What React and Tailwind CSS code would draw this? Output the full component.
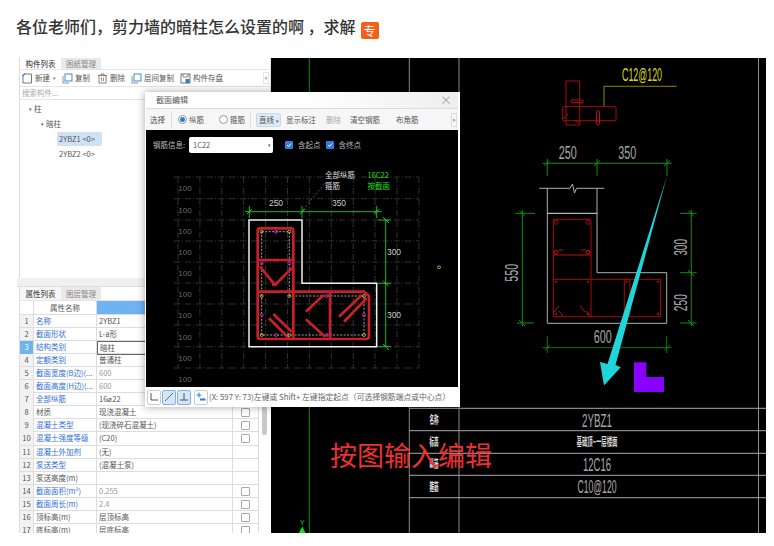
import React from 'react';

const cjk = { fontFamily: '"Noto Sans CJK SC", "Liberation Sans", sans-serif' };
const cad = '"Liberation Sans", "Noto Sans CJK SC", sans-serif';

const rows = [
    ['名称', '2YBZ1', 'blue', ''],
    ['截面形状', 'L-a形', 'blue', ''],
    ['结构类别', '暗柱', 'blue', ''],
    ['定额类别', '普通柱', 'blue', ''],
    ['截面宽度(B边)(...', '600', 'blue', 'gray'],
    ['截面高度(H边)(...', '600', 'blue', 'gray'],
    ['全部纵筋', '16⌀22', 'blue', ''],
    ['材质', '现浇混凝土', 'dark', '', true],
    ['混凝土类型', '(现浇碎石混凝土)', 'blue', '', true],
    ['混凝土强度等级', '(C20)', 'blue', '', true],
    ['混凝土外加剂', '(无)', 'blue', ''],
    ['泵送类型', '(混凝土泵)', 'blue', ''],
    ['泵送高度(m)', '', 'dark', ''],
    ['截面面积(m²)', '0.255', 'blue', 'gray', true],
    ['截面周长(m)', '2.4', 'blue', 'gray', true],
    ['顶标高(m)', '层顶标高', 'dark', '', true],
    ['底标高(m)', '层底标高', 'dark', '', true],
];

const SmallIcon = ({ type }) => (
    <svg width="11" height="11" viewBox="0 0 11 11" fill="none" className="shrink-0">
        {type === 'new' && <>
            <path d="M1 2.5V10H9.5V1H3" stroke="#555" strokeWidth="0.8" />
            <path d="M0.5 3L3 0.5" stroke="#2b7cd3" strokeWidth="1.2" />
        </>}
        {type === 'copy' && <>
            <path d="M1 3V10H7" stroke="#777" strokeWidth="0.8" />
            <rect x="3" y="1" width="7" height="7" stroke="#2b7cd3" strokeWidth="0.9" />
        </>}
        {type === 'del' && <>
            <path d="M1 2.5H10M4 2.5V1H7V2.5M2 2.5V10H9V2.5" stroke="#666" strokeWidth="0.8" />
            <path d="M4.5 4.5V8M6.5 4.5V8" stroke="#d0503c" strokeWidth="0.8" />
        </>}
        {type === 'save' && <>
            <rect x="1" y="1" width="9" height="9" stroke="#555" strokeWidth="0.8" />
            <path d="M3 1V4H8V1" stroke="#555" strokeWidth="0.7" />
            <rect x="5.5" y="6" width="4" height="4" fill="#2b7cd3" />
        </>}
    </svg>
);

const ToolItem = ({ type, label, className }) => (
    <div className={`flex items-center gap-[2px] ${className}`}>
        <SmallIcon type={type} />
        <span>{label}</span>
    </div>
);

const TopPanel = () => (
    <div className="h-[220px] border-l border-[#ddd] ml-[2px] border-r flex flex-col text-[7.5px] text-[#555]">
        <div className="flex h-[12px] border-b border-[#e5e5e5] shrink-0">
            <div className="w-[41px] text-center leading-[12px] font-medium">构件列表</div>
            <div className="w-[40px] text-center leading-[12px] bg-[#e9e9e9] text-[#888]">图纸管理</div>
        </div>
        <div className="flex items-center h-[17px] pl-[2px] border-b border-[#e5e5e5] shrink-0">
            <ToolItem type="new" label="新建" />
            <span className="ml-[3px] text-[5px] text-[#777]">▾</span>
            <ToolItem type="copy" label="复制" className="ml-[6px]" />
            <ToolItem type="del" label="删除" className="ml-[7px]" />
            <ToolItem type="copy" label="层间复制" className="ml-[6px]" />
            <ToolItem type="save" label="构件存盘" className="ml-[6px]" />
            <span className="ml-auto mr-[1px] w-[6px] h-[12px] border border-[#e5e5e5] text-[6px] leading-[10px] text-center">»</span>
        </div>
        <div className="h-[13px] pl-[2px] leading-[12px] text-[#aaa] border-b border-[#e5e5e5] shrink-0">搜索构件...</div>
        <div className="relative flex-1">
            <div className="flex items-center mt-[3px] ml-[9px] h-[12px]"><span className="text-[5px] mr-[2px]">▾</span>柱</div>
            <div className="flex items-center mt-[3px] ml-[21px] h-[12px]"><span className="text-[5px] mr-[2px]">▾</span>暗柱</div>
            <div className="ml-[37px] mt-[2px] w-[45px] h-[14px] leading-[14px] pl-[2px] bg-[#cfe2f5] rounded-[2px]">2YBZ1 &lt;0&gt;</div>
            <div className="ml-[37px] mt-[1px] h-[14px] leading-[14px] pl-[2px]">2YBZ2 &lt;0&gt;</div>
        </div>
    </div>
);

const PropRow = ({ n, row }) => {
    const [name, value, nameColor, valueColor, check] = row;
    const selected = n === 3;
    return (
        <div className="grid grid-cols-[14px_63px_136px_26px] h-[13.1px] leading-[12.5px] border-b border-[#ddd]">
            <div className={`text-center border-r border-[#ddd] ${selected ? 'bg-[#6fb3f2] text-white' : 'bg-[#f2f2f2] text-[#555]'}`}>{n}</div>
            <div className={`pl-[2px] border-r border-[#ddd] whitespace-nowrap overflow-hidden ${nameColor === 'blue' ? 'text-[#2f6fd8]' : 'text-[#555]'}`}>{name}</div>
            <div className={`pl-[2px] border-r whitespace-nowrap ${selected ? 'border border-[#666]' : 'border-[#ddd]'} ${valueColor === 'gray' ? 'text-[#999]' : 'text-[#555]'}`}>{value}</div>
            <div className="flex items-center justify-center border-r border-[#ddd]">
                {check && <span className="block w-[9px] h-[9px] border border-[#aaa] rounded-[1px]"></span>}
            </div>
        </div>
    );
};

const BottomPanel = () => (
    <div className="flex-1 min-h-0 ml-[2px] border-l border-[#ddd] text-[7.5px] text-[#555] overflow-hidden">
        <div className="flex h-[14px] border-b border-[#e5e5e5]">
            <div className="w-[41px] text-center leading-[14px] bg-[#f6f6f6] font-medium">属性列表</div>
            <div className="w-[40px] text-center leading-[14px] bg-[#e9e9e9] text-[#888]">图层管理</div>
        </div>
        <div className="flex">
            <div className="w-[239px] shrink-0">
                <div className="grid grid-cols-[14px_63px_136px_26px] h-[13.6px] leading-[13px] border-b border-[#ddd]">
                    <div className="border-r border-[#ddd]"></div>
                    <div className="text-center border-r border-[#ddd]">属性名称</div>
                    <div className="col-span-2 bg-[#6fb3f2]"></div>
                </div>
                {rows.map((row, i) => <PropRow key={i} n={i + 1} row={row} />)}
            </div>
            <div className="ml-[3px] mt-[99px] w-[5px] h-[35px] bg-[#c9c9c9] rounded-[2px]"></div>
        </div>
    </div>
);

const dot = (x, y, color, key) => <circle key={key} cx={x} cy={y} r="1.5" fill="none" stroke={color} strokeWidth="0.8" />;

const yellowDots = [[261.7, 231.7], [289.3, 231.7], [261.7, 296], [289.3, 296], [364, 296], [261.7, 335], [289.3, 335], [364, 335], [439, 267.3]];
const pinkDots = [[276, 231.7], [261.7, 263.3], [289.3, 263.3], [326.7, 296], [261.7, 315], [364, 315], [276, 335], [326.7, 335]];

const SectionDrawing = () => (
    <svg width="312" height="229" viewBox="146 158 312 229" className="block">
        <g stroke="#303030" strokeWidth="1" strokeDasharray="6 2 1 2" fill="none">
            {[0, 1, 2, 3, 4, 5, 6, 7, 8, 9, 10, 11].map(i => <line key={i} x1={178 + 21.9 * i} y1="177" x2={178 + 21.9 * i} y2="368" />)}
            {[177, 198.7, 220, 241, 262, 283, 304, 325, 346.7, 368].map(y => <line key={y} x1="174" y1={y} x2="419" y2={y} />)}
        </g>
        {[188, 210, 231, 252, 272.7, 294, 315.3, 336.7, 358, 379].map(y => (
            <text key={y} x="185" y={y + 3} textAnchor="middle" fontSize="8" fill="#6a6a6a" fontFamily={cad}>100</text>
        ))}
        <path d="M303 210L325 183" stroke="#666" strokeWidth="0.8" strokeDasharray="2 2" />
        <g fontSize="7.5" fontFamily='"Noto Sans CJK SC", sans-serif'>
            <text x="325" y="178" fill="#ddd">全部纵筋</text>
            <text x="325" y="189" fill="#ddd">箍筋</text>
            <text x="367.5" y="178" fill="#19e019">16C22</text>
            <text x="367.5" y="189" fill="#19e019">按截面</text>
        </g>
        <path d="M249 220H302V283.3H376.7V346.7H249Z" fill="none" stroke="#eee" strokeWidth="1.5" />
        <g stroke="#1fd11f" strokeWidth="0.9" fill="none">
            <path d="M245 211.7H381.7M249.3 206V218M302 206V218M376.7 206V218M247 214L252 209M300 214L305 209M374 214L379 209" />
            <path d="M385.7 220V347M378 220H391M378 283.3H391M378 346.7H391M383 217L389 223M383 280.5L389 286.5M383 344L389 350" />
        </g>
        <g fontSize="8.5" fill="#ccc" fontFamily={cad} textAnchor="middle">
            <text x="276" y="206">250</text>
            <text x="339" y="206">350</text>
            <text x="394" y="255">300</text>
            <text x="394" y="318">300</text>
        </g>
        <path d="M261.7 231.7H289.3V296H364V335H261.7Z" fill="none" stroke="#ccc" strokeWidth="0.8" strokeDasharray="2 1.5" />
        <g stroke="#c8202a" strokeWidth="2.7" fill="none" strokeLinejoin="round">
            <path d="M260 228.3H291Q293.3 228.3 293.3 231V291.7H364L369 296V336Q369 339 366 339H260.5Q257.7 339 257.7 336V231Q257.7 228.3 260 228.3Z" />
            <path d="M258 260H292M260 266.7L275 285L291.7 268.3M272 285L278 283M258 291.7H293.3M293.3 291.7V339M330 293V338" />
            <path d="M269 318.3L289 338.3M273.3 314L291.7 331.7M306 311.7L323.3 295M306 319.3L325 336.7M339 316.7L361.7 295M344 321.7L366.7 298.3" />
        </g>
        {yellowDots.map((p, i) => dot(p[0], p[1], '#d8c53a', `y${i}`))}
        {pinkDots.map((p, i) => dot(p[0], p[1], '#e020e0', `p${i}`))}
    </svg>
);

const Radio = ({ on }) => (
    <span className="flex items-center justify-center w-[9px] h-[9px] rounded-full border border-[#999] bg-white">
        {on && <span className="block w-[5px] h-[5px] rounded-full bg-[#2b7cd3]"></span>}
    </span>
);

const Check = () => (
    <span className="flex items-center justify-center w-[8px] h-[8px] bg-[#2f7fe0] rounded-[1px]">
        <svg width="6" height="6" viewBox="0 0 6 6"><path d="M1 3L2.5 4.5L5 1.5" fill="none" stroke="white" strokeWidth="1" /></svg>
    </span>
);

const StatusButton = ({ active, children, className }) => (
    <div className={`w-[14px] h-[15px] rounded-[2px] border flex items-center justify-center shrink-0 ${active ? 'bg-[#d5e6f8] border-[#7fb2e8]' : 'bg-white border-[#ccc]'} ${className}`}>
        <svg width="10" height="10" viewBox="0 0 10 10" fill="none">{children}</svg>
    </div>
);

const SectionDialog = () => (
    <div className="absolute left-[128px] top-[34px] w-[315px] h-[315px] bg-white pl-px pr-[2px] flex flex-col text-[7.5px] text-[#555] shadow-[0_0_8px_rgba(0,0,0,0.35)]">
        <div className="flex items-center justify-between h-[16px] pl-[10px] pr-[6px] shrink-0 bg-gradient-to-r from-white via-white to-[#eeeeee]">
            <span className="text-[8px]">截面编辑</span>
            <span className="text-[12px] leading-none text-[#888] font-light">×</span>
        </div>
        <div className="flex items-center h-[22px] bg-[#f6f6f6] border-t border-[#ddd] shrink-0">
            <span className="ml-[4px] w-[16px]">选择</span>
            <span className="ml-[5px] w-px h-[14px] bg-[#ddd]"></span>
            <div className="ml-[6px] flex items-center gap-[2px]"><Radio on /><span>纵筋</span></div>
            <div className="ml-[15px] flex items-center gap-[2px]"><Radio /><span>箍筋</span></div>
            <span className="ml-[5px] w-px h-[14px] bg-[#ddd]"></span>
            <span className="ml-[5px] w-[25px] h-[14px] leading-[12px] pl-[2px] bg-[#dfeaf7] border border-[#c5d9ef] rounded-[2px] whitespace-nowrap">直线 <span className="text-[5px]">▾</span></span>
            <span className="ml-[5px]">显示标注</span>
            <span className="ml-[10px] text-[#aaa]">删除</span>
            <span className="ml-[9px]">清空钢筋</span>
            <span className="ml-[16px]">布角筋</span>
            <span className="ml-auto mr-[1px] w-[6px] h-[14px] border border-[#ddd] text-[6px] leading-[12px] text-center">»</span>
        </div>
        <div className="flex-1 min-h-0 bg-black flex flex-col">
            <div className="flex items-center h-[28px] pt-[1px] pl-[7px] text-[#bbb] shrink-0">
                <span className="w-[36px] whitespace-nowrap">钢筋信息:</span>
                <div className="flex items-center justify-between w-[84px] h-[16px] pl-[4px] pr-[2px] bg-white text-[#555] rounded-[2px]">
                    <span>1C22</span>
                    <span className="text-[5px]">▾</span>
                </div>
                <span className="ml-[12px]"><Check /></span>
                <span className="ml-[5px]">含起点</span>
                <span className="ml-[5px]"><Check /></span>
                <span className="ml-[5px]">含终点</span>
            </div>
            <SectionDrawing />
        </div>
        <div className="flex items-center h-[20px] shrink-0 pl-[1px] bg-white">
            <StatusButton><path d="M2 1V8H9" stroke="#555" /></StatusButton>
            <StatusButton active className="ml-px"><path d="M1 9L9 1" stroke="#666" /></StatusButton>
            <StatusButton active className="ml-px"><path d="M5 1V8M1 8H9" stroke="#555" /></StatusButton>
            <StatusButton className="ml-[3px]"><path d="M3 0.5V5.5M0.5 3H5.5" stroke="#2b7cd3" /><path d="M4 7.5H9.5" stroke="#2b7cd3" strokeWidth="2" /></StatusButton>
            <span className="ml-px whitespace-nowrap text-[#666] text-[7.8px]">(X: 597 Y: 73)左键或 Shift+ 左键指定起点（可选择钢筋端点或中心点）</span>
        </div>
    </div>
);

const CadText = ({ x, y, w, children, color = '#a8a8a8', size = 18, rotate }) => (
    <text
        x={x}
        y={y + size * 0.36}
        textAnchor="middle"
        textLength={w}
        lengthAdjust="spacingAndGlyphs"
        fontSize={size}
        fill={color}
        fontFamily={cad}
        transform={rotate ? `rotate(-90 ${x} ${y})` : undefined}
    >
        {children}
    </text>
);

const CadLabel = ({ y, children }) => (
    <text x="434" y={y + 4} textAnchor="middle" textLength="9" lengthAdjust="spacingAndGlyphs" fontSize="11" fontWeight="700" fill="#e8e8e8" fontFamily='"Noto Sans CJK SC", sans-serif'>{children}</text>
);

const CadDrawing = () => (
    <svg width="495" height="475" viewBox="271 58 495 475" className="block">
        <path d="M309.3 58V533" stroke="#0b8f0b" strokeWidth="1" />
        <path d="M409.3 58V533M459 58V533" stroke="#8a8a8a" strokeWidth="1" />
        <path d="M758.5 58V533" stroke="#8f8f8f" strokeWidth="1" />
        <path d="M409 408.3H766M409 430.7H766M409 453.3H766M409 475.3H766M409 497.7H766" stroke="#a8a8a8" strokeWidth="1" />
        <text x="302.3" y="525" textAnchor="middle" fontSize="7" fill="#19d019" fontFamily={cad}>Y</text>
        <path d="M302.3 526.5L305.5 533H299Z" fill="#18e018" />

        <path d="M604 106.7V86.3H676.7" fill="none" stroke="#8a8a00" strokeWidth="1" />
        <CadText x={642} y={75} w={40} color="#dcdc10">C12@120</CadText>
        <g fill="none" stroke="#a30d0d" strokeWidth="1">
            <rect x="566" y="81" width="13.7" height="44" />
            <rect x="562.3" y="106.7" width="53.7" height="14" rx="1" />
            <rect x="570.7" y="100" width="12.6" height="2.7" rx="1.3" stroke="#c01010" />
            <rect x="596.5" y="110.7" width="3" height="14" rx="1.5" stroke="#c01010" />
            <path d="M563 119L568 114M575 120L578 123" />
        </g>

        <g stroke="#0c8f0c" strokeWidth="1" fill="none">
            <path d="M542.7 163.3H671.7M547.3 159V175.7M597 159V175.7M667 159V175.7M544.5 166L550 160.5M594 166L600 160.5M664 166L670 160.5" />
            <path d="M522.3 210V326.7M515 213.3H535M517 323H534M519 210.5L525 216.5M519 320L525 326" />
            <path d="M691.3 210V326M680 213.3H696.7M680 272.7H696.7M680 323H696.7M688 210.5L694 216.5M688 270L694 276M688 320L694 326" />
            <path d="M542.3 347.7H671.7M547.3 336V353M666.7 336V353M544.5 350.5L550 345M664 350.5L670 345" stroke="#0a7a0a" />
        </g>
        <CadText x={567.7} y={152.7} w={18}>250</CadText>
        <CadText x={627.3} y={152.7} w={18}>350</CadText>
        <CadText x={511.7} y={272.7} w={18} rotate>550</CadText>
        <CadText x={681} y={247.3} w={17} rotate>300</CadText>
        <CadText x={681} y={302.7} w={17} rotate>250</CadText>
        <CadText x={602.7} y={336.7} w={18}>600</CadText>

        <path d="M539.3 188.3H570L572.5 184L574.5 193L576.5 188.3H604.3M547.3 188.3V323.3H666.7V272.7H597V188.3" fill="none" stroke="#b0b0b0" strokeWidth="1" />
        <path d="M547.3 213.3H597" stroke="#e0e0e0" strokeWidth="1" />
        <g fill="none" stroke="#a80a0a" strokeWidth="1">
            <path d="M553.3 220V316.7H660.7V279.3H591V220Q591 219.3 590 219.3H554Q553.3 219.3 553.3 220Z" />
            <path d="M553.3 279.3H591M591 279.3V316.7M624.3 279.3H628Q630 279.3 630 281V315L628 316.7H624.3Z" />
            <path d="M553.5 255H591" stroke="#c01010" />
            <circle cx="556" cy="222.3" r="2" />
            <circle cx="588" cy="222.3" r="2" />
            <circle cx="556" cy="252.3" r="2" stroke="#d01010" />
            <circle cx="588" cy="252.3" r="2" stroke="#d01010" />
            <path d="M558 250H563M586 250H581M554 312L559 306M563 316L559 311M585 312L580 306M590 316L586 311" stroke="#c01010" />
        </g>
        {[[556, 281.7], [588, 281.7], [556, 314], [588, 314], [626.7, 281.7], [658, 281.7], [658, 314]].map(p => (
            <circle key={p.join()} cx={p[0]} cy={p[1]} r="1" fill="#c01010" />
        ))}

        <polygon points="667,176 615.5,365 620.7,367.3 604,385.5 600,362 607.5,364" fill="#1ed5d9" />
        <polygon points="634,362.3 646.3,362.3 646.3,377 664,377 664,392 634,392" fill="#8800ff" />

        <CadLabel y={420}>名称</CadLabel>
        <CadLabel y={442}>标高</CadLabel>
        <CadLabel y={464}>纵筋</CadLabel>
        <CadLabel y={486.7}>箍筋</CadLabel>
        <CadText x={597} y={420.7} w={30}>2YBZ1</CadText>
        <text x="597" y="446" textAnchor="middle" textLength="41" lengthAdjust="spacingAndGlyphs" fontSize="11" fontWeight="700" fill="#d8d8d8" fontFamily='"Noto Sans CJK SC", sans-serif'>基础顶~一层楼面</text>
        <CadText x={597} y={465} w={28}>12C16</CadText>
        <CadText x={597} y={487} w={39}>C10@120</CadText>
    </svg>
);

const App = () => {
    return (
        <div className="w-[774px] h-[546px] bg-white overflow-hidden" style={cjk}>
            <div className="flex items-center h-[58px] pl-4 pb-[6px]">
                <h1 className="text-[16px] font-medium text-[#333] whitespace-pre">各位老师们，剪力墙的暗柱怎么设置的啊 ，求解</h1>
                <span className="ml-[5px] mt-[9px] w-[18px] h-[17px] bg-[#f55f1a] rounded-[2px] text-white text-[12px] leading-[17px] text-center">专</span>
            </div>
            <div className="relative flex ml-[17px] w-[749px] h-[475px]">
                <div className="w-[254px] shrink-0 flex flex-col bg-white">
                    <TopPanel />
                    <div className="h-[9px] bg-[#f0f0f0] border-b border-[#ddd] shrink-0"></div>
                    <BottomPanel />
                </div>
                <div className="flex-1 bg-black overflow-hidden">
                    <CadDrawing />
                </div>
                <SectionDialog />
                <span className="absolute left-[313px] top-[379px] text-[27px] leading-[36px] text-[#ee3030] whitespace-nowrap">按图输入编辑</span>
            </div>
        </div>
    );
};

export default App;
